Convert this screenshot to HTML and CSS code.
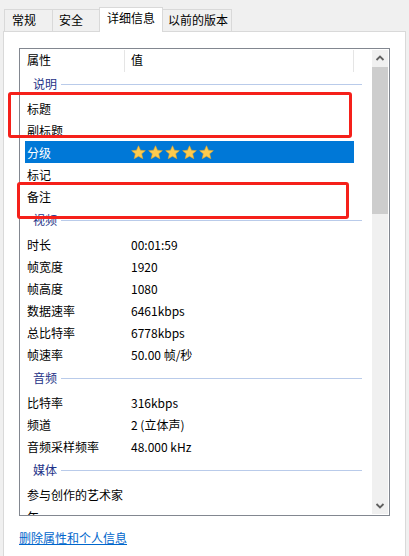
FILE: index.html
```html
<!DOCTYPE html>
<html lang="zh">
<head>
<meta charset="utf-8">
<link rel="stylesheet" href="styles.css">
</head>
<body>
<div class="tabs">
  <div class="tab t1">常规</div>
  <div class="tab t2">安全</div>
  <div class="tab t3 active">详细信息</div>
  <div class="tab t4">以前的版本</div>
</div>
<div class="panel">
  <div class="listbox">
    <div class="list">
      <div class="colhead"><div class="ch ch1">属性</div><div class="ch ch2">值</div></div>
      <div class="group"><span>说明</span><i class="rule"></i></div>
      <div class="row"><span class="k">标题</span><span class="v"></span></div>
      <div class="row"><span class="k">副标题</span><span class="v"></span></div>
      <div class="row sel"><span class="k">分级</span><span class="v stars">
        <svg viewBox="0 0 16 16" class="star"><polygon points="8,0.8 10.1,5.6 15.3,6 11.4,9.4 12.6,14.6 8,11.9 3.4,14.6 4.6,9.4 0.7,6 5.9,5.6"/></svg>
        <svg viewBox="0 0 16 16" class="star"><polygon points="8,0.8 10.1,5.6 15.3,6 11.4,9.4 12.6,14.6 8,11.9 3.4,14.6 4.6,9.4 0.7,6 5.9,5.6"/></svg>
        <svg viewBox="0 0 16 16" class="star"><polygon points="8,0.8 10.1,5.6 15.3,6 11.4,9.4 12.6,14.6 8,11.9 3.4,14.6 4.6,9.4 0.7,6 5.9,5.6"/></svg>
        <svg viewBox="0 0 16 16" class="star"><polygon points="8,0.8 10.1,5.6 15.3,6 11.4,9.4 12.6,14.6 8,11.9 3.4,14.6 4.6,9.4 0.7,6 5.9,5.6"/></svg>
        <svg viewBox="0 0 16 16" class="star"><polygon points="8,0.8 10.1,5.6 15.3,6 11.4,9.4 12.6,14.6 8,11.9 3.4,14.6 4.6,9.4 0.7,6 5.9,5.6"/></svg>
      </span></div>
      <div class="row"><span class="k">标记</span><span class="v"></span></div>
      <div class="row"><span class="k">备注</span><span class="v"></span></div>
      <div class="group"><span>视频</span><i class="rule"></i></div>
      <div class="row"><span class="k">时长</span><span class="v">00:01:59</span></div>
      <div class="row"><span class="k">帧宽度</span><span class="v">1920</span></div>
      <div class="row"><span class="k">帧高度</span><span class="v">1080</span></div>
      <div class="row"><span class="k">数据速率</span><span class="v">6461kbps</span></div>
      <div class="row"><span class="k">总比特率</span><span class="v">6778kbps</span></div>
      <div class="row"><span class="k">帧速率</span><span class="v">50.00 帧/秒</span></div>
      <div class="group"><span>音频</span><i class="rule"></i></div>
      <div class="row"><span class="k">比特率</span><span class="v">316kbps</span></div>
      <div class="row"><span class="k">频道</span><span class="v">2 (立体声)</span></div>
      <div class="row"><span class="k">音频采样频率</span><span class="v">48.000 kHz</span></div>
      <div class="group"><span>媒体</span><i class="rule"></i></div>
      <div class="row"><span class="k">参与创作的艺术家</span><span class="v"></span></div>
      <div class="row"><span class="k">年</span><span class="v"></span></div>
    </div>
    <div class="scrollbar">
      <div class="arrow"><svg viewBox="0 0 16 17" class="chev"><polyline points="4.5,10 8,6.5 11.5,10"/></svg></div>
      <div class="thumb"></div>
      <div class="track"></div>
      <div class="arrow"><svg viewBox="0 0 16 17" class="chev"><polyline points="4.5,7 8,10.5 11.5,7"/></svg></div>
    </div>
  </div>
  <a class="link" href="#">删除属性和个人信息</a>
</div>
<div class="mark mark1"></div>
<div class="mark mark2"></div>
</body>
</html>
```
FILE: styles.css
```css
html, body {
  margin: 0;
  padding: 0;
}
body {
  width: 409px;
  height: 556px;
  overflow: hidden;
  position: relative;
  background: #f0f0f0;
  font-family: "Noto Sans CJK SC", "Noto Sans", sans-serif;
  font-size: 12px;
  color: #000;
}
.tabs {
  display: flex;
  align-items: flex-end;
  height: 31px;
  padding-left: 4px;
  box-sizing: border-box;
}
.tab {
  box-sizing: border-box;
  height: 22px;
  line-height: 20px;
  border: 1px solid #d9d9d9;
  border-bottom: 0;
  background: #f0f0f0;
  white-space: nowrap;
}
.tab + .tab { margin-left: -1px; }
.t1 { width: 49px; padding-left: 7px; }
.t2 { width: 48px; padding-left: 6px; }
.t3 { width: 64px; padding-left: 7px; }
.t4 { width: 70px; padding-left: 5px; }
.tab.active {
  position: relative;
  z-index: 1;
  height: 25px;
  margin-bottom: -1px;
  line-height: 20px;
  background: #fff;
}
.panel {
  margin-left: 3px;
  width: 403px;
  height: 540px;
  box-sizing: border-box;
  border: 1px solid #d9d9d9;
  background: #fff;
  padding-top: 16px;
  padding-left: 15px;
}
.listbox {
  box-sizing: border-box;
  width: 371px;
  height: 468px;
  border: 1px solid #828790;
  display: flex;
  background: #fff;
}
.list {
  width: 352px;
  overflow: hidden;
}
.scrollbar {
  width: 16px;
  margin: 1px 1px 1px 0;
  background: #f0f0f0;
  display: flex;
  flex-direction: column;
}
.arrow {
  height: 17px;
  flex: none;
}
.chev {
  display: block;
  width: 16px;
  height: 17px;
  fill: none;
  stroke: #606060;
  stroke-width: 1.8;
}
.thumb {
  height: 147px;
  background: #cdcdcd;
  flex: none;
}
.track { flex: 1; }
.colhead {
  display: flex;
  height: 22px;
  line-height: 22px;
}
.ch {
  box-sizing: border-box;
  border-right: 1px solid #e5e5e5;
  height: 22px;
  margin-top: 1px;
  line-height: 20px;
}
.ch1 { width: 105px; padding-left: 7px; }
.ch2 { width: 229px; padding-left: 6px; }
.group {
  display: flex;
  align-items: center;
  height: 26px;
  padding-left: 13px;
  color: #1e3287;
}
.group span { line-height: 16px; }
.rule {
  flex: 1;
  height: 1px;
  background: #b9cbea;
  margin-left: 4px;
  margin-right: 10px;
}
.row {
  display: flex;
  align-items: center;
  margin-left: 5px;
  width: 329px;
  height: 22px;
  padding-left: 2px;
  box-sizing: border-box;
  white-space: nowrap;
}
.k { width: 104px; flex: none; }
.v { flex: 1; }
.row.sel {
  background: #0078d7;
  color: #fff;
}
.stars {
  display: flex;
  gap: 2px;
  align-items: center;
}
.star {
  width: 15px;
  height: 15px;
  display: block;
  fill: #fdcb4e;
  stroke: #e9a825;
  stroke-width: 0.6;
  stroke-linejoin: round;
}
.link {
  display: inline-block;
  margin-top: 14px;
  line-height: 16px;
  color: #0066cc;
  text-decoration: underline;
}
.mark {
  position: absolute;
  box-sizing: border-box;
  border: 3px solid #f5201a;
  border-radius: 3px;
}
.mark1 { left: 8px; top: 92px; width: 344px; height: 46px; }
.mark2 { left: 17px; top: 182px; width: 332px; height: 37px; }
```
